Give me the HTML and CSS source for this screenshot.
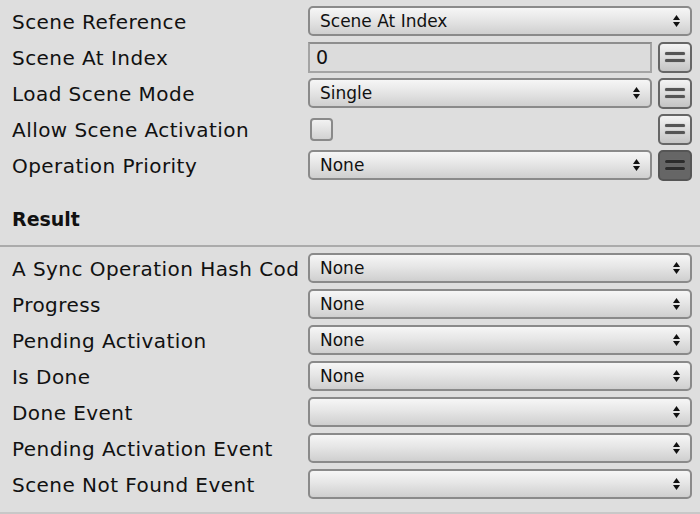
FILE: index.html
```html
<!DOCTYPE html>
<html>
<head>
<meta charset="utf-8">
<link rel="stylesheet" href="styles.css">
</head>
<body>
<div class="panel">
  <div class="section top">
    <div class="row">
      <div class="label">Scene Reference</div>
      <div class="ctrl"><div class="dropdown"><span class="val">Scene At Index</span><svg class="arrows" width="7" height="12" viewBox="0 0 7 12"><polygon points="0,5 3.5,0 7,5"/><polygon points="0,7 7,7 3.5,12"/></svg></div></div>
    </div>
    <div class="row">
      <div class="label">Scene At Index</div>
      <div class="ctrl"><div class="field"><span class="val">0</span></div><div class="eqbtn"><span></span><span></span></div></div>
    </div>
    <div class="row">
      <div class="label">Load Scene Mode</div>
      <div class="ctrl"><div class="dropdown"><span class="val">Single</span><svg class="arrows" width="7" height="12" viewBox="0 0 7 12"><polygon points="0,5 3.5,0 7,5"/><polygon points="0,7 7,7 3.5,12"/></svg></div><div class="eqbtn"><span></span><span></span></div></div>
    </div>
    <div class="row">
      <div class="label">Allow Scene Activation</div>
      <div class="ctrl"><div class="checkcell"><div class="checkbox"></div></div><div class="eqbtn"><span></span><span></span></div></div>
    </div>
    <div class="row">
      <div class="label">Operation Priority</div>
      <div class="ctrl"><div class="dropdown"><span class="val">None</span><svg class="arrows" width="7" height="12" viewBox="0 0 7 12"><polygon points="0,5 3.5,0 7,5"/><polygon points="0,7 7,7 3.5,12"/></svg></div><div class="eqbtn pressed"><span></span><span></span></div></div>
    </div>
  </div>
  <div class="header">Result</div>
  <div class="section bottom">
    <div class="row">
      <div class="label">A Sync Operation Hash Code</div>
      <div class="ctrl"><div class="dropdown"><span class="val">None</span><svg class="arrows" width="7" height="12" viewBox="0 0 7 12"><polygon points="0,5 3.5,0 7,5"/><polygon points="0,7 7,7 3.5,12"/></svg></div></div>
    </div>
    <div class="row">
      <div class="label">Progress</div>
      <div class="ctrl"><div class="dropdown"><span class="val">None</span><svg class="arrows" width="7" height="12" viewBox="0 0 7 12"><polygon points="0,5 3.5,0 7,5"/><polygon points="0,7 7,7 3.5,12"/></svg></div></div>
    </div>
    <div class="row">
      <div class="label">Pending Activation</div>
      <div class="ctrl"><div class="dropdown"><span class="val">None</span><svg class="arrows" width="7" height="12" viewBox="0 0 7 12"><polygon points="0,5 3.5,0 7,5"/><polygon points="0,7 7,7 3.5,12"/></svg></div></div>
    </div>
    <div class="row">
      <div class="label">Is Done</div>
      <div class="ctrl"><div class="dropdown"><span class="val">None</span><svg class="arrows" width="7" height="12" viewBox="0 0 7 12"><polygon points="0,5 3.5,0 7,5"/><polygon points="0,7 7,7 3.5,12"/></svg></div></div>
    </div>
    <div class="row">
      <div class="label">Done Event</div>
      <div class="ctrl"><div class="dropdown"><span class="val"></span><svg class="arrows" width="7" height="12" viewBox="0 0 7 12"><polygon points="0,5 3.5,0 7,5"/><polygon points="0,7 7,7 3.5,12"/></svg></div></div>
    </div>
    <div class="row">
      <div class="label">Pending Activation Event</div>
      <div class="ctrl"><div class="dropdown"><span class="val"></span><svg class="arrows" width="7" height="12" viewBox="0 0 7 12"><polygon points="0,5 3.5,0 7,5"/><polygon points="0,7 7,7 3.5,12"/></svg></div></div>
    </div>
    <div class="row">
      <div class="label">Scene Not Found Event</div>
      <div class="ctrl"><div class="dropdown"><span class="val"></span><svg class="arrows" width="7" height="12" viewBox="0 0 7 12"><polygon points="0,5 3.5,0 7,5"/><polygon points="0,7 7,7 3.5,12"/></svg></div></div>
    </div>
  </div>
</div>
</body>
</html>
```

FILE: styles.css
```css
html, body {
  margin: 0;
  padding: 0;
  background: #dedede;
  width: 700px;
  height: 514px;
  overflow: hidden;
}
body {
  font-family: "DejaVu Sans", sans-serif;
  color: #111;
}
.panel {
  height: 512px;
  border-bottom: 2px solid #c8c8c8;
  display: flex;
  flex-direction: column;
}
.section.top {
  padding: 3px 8px 0 12px;
}
.section.bottom {
  border-top: 2px solid #ababab;
  padding: 3px 8px 0 12px;
}
.row {
  height: 36px;
  display: flex;
  align-items: center;
}
.label {
  width: 286px;
  margin-right: 10px;
  font-size: 20px;
  letter-spacing: 0.45px;
  white-space: nowrap;
  overflow: hidden;
  flex-shrink: 0;
  padding-top: 2px;
}
.ctrl {
  flex: 1;
  display: flex;
  align-items: center;
  gap: 6px;
  height: 100%;
}
.dropdown {
  flex: 1;
  height: 30px;
  box-sizing: border-box;
  border: 2px solid #8a8a8a;
  border-radius: 5px;
  background: linear-gradient(#f6f6f6, #e6e6e6 45%, #cfcfcf);
  display: flex;
  align-items: center;
  padding: 0 10px 0 10px;
}
.val {
  flex: 1;
  font-size: 17px;
  white-space: nowrap;
}
.arrows {
  fill: #111;
  flex-shrink: 0;
}
.field {
  flex: 1;
  height: 31px;
  box-sizing: border-box;
  border: 2px solid #a4a4a4;
  border-top-color: #8e8e8e;
  background: #dcdcdc;
  display: flex;
  align-items: center;
  padding: 0 6px;
}
.field .val {
  font-size: 19px;
}
.eqbtn {
  width: 34px;
  height: 31px;
  box-sizing: border-box;
  border: 2px solid #666;
  border-radius: 5px;
  background: linear-gradient(#f4f4f4, #dadada 55%, #c4c4c4);
  display: flex;
  flex-direction: column;
  align-items: center;
  justify-content: center;
  gap: 4px;
  flex-shrink: 0;
}
.eqbtn span {
  display: block;
  width: 20px;
  height: 3px;
  border-radius: 2px;
  background: #555;
  box-shadow: 0 0 1px #777;
}
.eqbtn.pressed {
  background: #666;
  border-color: #555;
}
.eqbtn.pressed span {
  background: #2c2c2c;
}
.checkcell {
  flex: 1;
  display: flex;
  align-items: center;
  padding-left: 2px;
}
.checkbox {
  width: 23px;
  height: 23px;
  box-sizing: border-box;
  border: 2px solid #8a8a8a;
  border-radius: 4px;
  background: linear-gradient(#f2f2f2, #d2d2d2);
}
.header {
  height: 62px;
  box-sizing: border-box;
  padding: 24px 12px 0;
  font-size: 19px;
  font-weight: bold;
  line-height: 24px;
}
```
